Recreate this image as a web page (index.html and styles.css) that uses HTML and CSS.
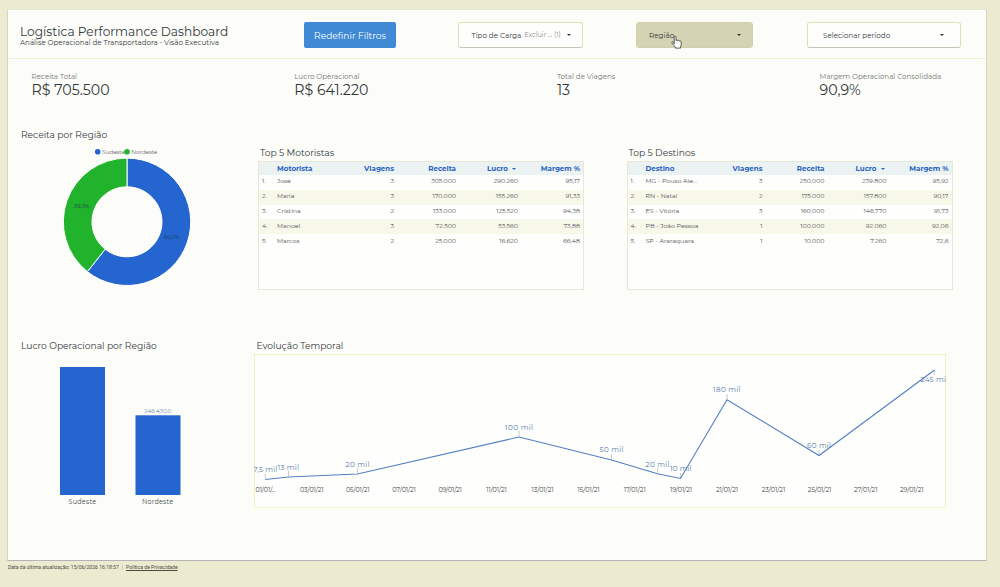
FILE: index.html
```html
<!DOCTYPE html>
<html lang="pt-BR">
<head>
<meta charset="utf-8">
<title>Logística Performance Dashboard</title>
<link rel="stylesheet" href="styles.css">
</head>
<body>
<main class="sheet">
  <header class="topbar">
    <div class="brand">
      <h1 class="title">Logística Performance Dashboard</h1>
      <p class="subtitle">Análise Operacional de Transportadora - Visão Executiva</p>
    </div>
    <button class="reset">Redefinir Filtros</button>
    <div class="filter filter-load"><span class="filter-name">Tipo de Carga</span><span class="filter-value">: Excluir ... (1)</span><i class="caret"></i></div>
    <div class="filter filter-region"><span class="filter-name">Região</span><i class="caret"></i>
      <svg class="pointer" viewBox="0 0 12 14"><path d="M3.2 8.7V2.2c0-1.3 1.8-1.3 1.8 0v3.3c.2-.8 1.7-.7 1.8.3.3-.7 1.6-.5 1.7.4.4-.6 1.7-.3 1.7.8v2.5c0 1-.7 1.7-.7 2.8v.8H4.4v-.8C3.4 11 2.5 9.6 1 8.2c-.8-.9.3-1.8 1.2-1z"/></svg>
    </div>
    <div class="filter filter-period"><span class="filter-name">Selecionar período</span><i class="caret"></i></div>
  </header>

  <section class="kpis">
    <div><p class="kpi-label">Receita Total</p><p class="kpi-value">R$ 705.500</p></div>
    <div><p class="kpi-label">Lucro Operacional</p><p class="kpi-value">R$ 641.220</p></div>
    <div><p class="kpi-label">Total de Viagens</p><p class="kpi-value">13</p></div>
    <div><p class="kpi-label">Margem Operacional Consolidada</p><p class="kpi-value">90,9%</p></div>
  </section>

  <section class="row-top">
    <div class="donut-panel">
      <h2 class="heading">Receita por Região</h2>
      <svg class="donut" width="160" height="145" viewBox="50 145 160 145">
        <circle cx="97.7" cy="151.8" r="2.8" fill="#2465cf"/>
        <text class="legend" x="102" y="154" textLength="23">Sudeste</text>
        <circle cx="127" cy="151.8" r="2.8" fill="#21b32c"/>
        <text class="legend" x="131.3" y="154" textLength="26">Nordeste</text>
        <path d="M127 158.1A63.7 63.7 0 1 1 87.35 271.65L105.2 249.2A35 35 0 1 0 127 186.8Z" fill="#2465cf" stroke="#fff"/>
        <path d="M127 158.1A63.7 63.7 0 0 0 87.35 271.65L105.2 249.2A35 35 0 0 1 127 186.8Z" fill="#21b32c" stroke="#fff"/>
        <text class="slice" x="74" y="207.7" textLength="15.5">39,3%</text>
        <text class="slice" x="164" y="239.4" textLength="16">60,7%</text>
      </svg>
    </div>
    <div class="table-panel">
      <h2 class="heading">Top 5 Motoristas</h2>
      <div class="box">
        <table class="rank">
          <colgroup><col class="c-i"><col class="c-n"><col class="c-v"><col class="c-r"><col class="c-l"><col class="c-m"></colgroup>
          <thead><tr><th></th><th>Motorista</th><th>Viagens</th><th>Receita</th><th class="sorted">Lucro<i class="sort"></i></th><th>Margem %</th></tr></thead>
          <tbody>
            <tr><td>1.</td><td>José</td><td>3</td><td>305.000</td><td>290.260</td><td>95,17</td></tr>
            <tr><td>2.</td><td>Maria</td><td>3</td><td>170.000</td><td>155.260</td><td>91,33</td></tr>
            <tr><td>3.</td><td>Cristina</td><td>2</td><td>133.000</td><td>125.520</td><td>94,38</td></tr>
            <tr><td>4.</td><td>Manoel</td><td>3</td><td>72.500</td><td>53.560</td><td>73,88</td></tr>
            <tr><td>5.</td><td>Marcos</td><td>2</td><td>25.000</td><td>16.620</td><td>66,48</td></tr>
          </tbody>
        </table>
      </div>
    </div>
    <div class="table-panel">
      <h2 class="heading">Top 5 Destinos</h2>
      <div class="box">
        <table class="rank">
          <colgroup><col class="c-i"><col class="c-n"><col class="c-v"><col class="c-r"><col class="c-l"><col class="c-m"></colgroup>
          <thead><tr><th></th><th>Destino</th><th>Viagens</th><th>Receita</th><th class="sorted">Lucro<i class="sort"></i></th><th>Margem %</th></tr></thead>
          <tbody>
            <tr><td>1.</td><td>MG - Pouso Ale...</td><td>3</td><td>250.000</td><td>239.800</td><td>95,92</td></tr>
            <tr><td>2.</td><td>RN - Natal</td><td>2</td><td>175.000</td><td>157.800</td><td>90,17</td></tr>
            <tr><td>3.</td><td>ES - Vitória</td><td>3</td><td>160.000</td><td>146.770</td><td>91,73</td></tr>
            <tr><td>4.</td><td>PB - João Pessoa</td><td>1</td><td>100.000</td><td>92.060</td><td>92,06</td></tr>
            <tr><td>5.</td><td>SP - Araraquara</td><td>1</td><td>10.000</td><td>7.260</td><td>72,6</td></tr>
          </tbody>
        </table>
      </div>
    </div>
  </section>

  <section class="row-bottom">
    <div class="bar-panel">
      <h2 class="heading">Lucro Operacional por Região</h2>
      <svg class="bars" width="200" height="155" viewBox="20 354 200 155">
        <rect x="60" y="367" width="45" height="128" fill="#2465cf"/>
        <rect x="135.5" y="415.3" width="45" height="79.7" fill="#2465cf"/>
        <text class="bar-value" x="144.3" y="412.8" textLength="27">246.430,0</text>
        <text class="axis" x="68.5" y="504.3" textLength="27.5">Sudeste</text>
        <text class="axis" x="142" y="504.3" textLength="31">Nordeste</text>
      </svg>
    </div>
    <div class="line-panel">
      <h2 class="heading">Evolução Temporal</h2>
      <svg class="line" width="692" height="154" viewBox="254 354 692 154">
        <rect class="frame" x="254.5" y="354.5" width="691" height="153"/>
        <path class="ticks" d="M265.3 474v5M288.5 471v5M357.5 468v5M519 431v5M611.5 454v5M657.5 468v5M680.5 473v5M727 394v5M819 450v5M934.5 371v4"/>
        <polyline class="trend" points="265.3,479.5 288.5,477 357.5,474 519,437 611.5,460 657.5,473.7 680.5,478.5 727,399.7 819,455.5 934.5,370"/>
        <g class="point">
          <text x="253.3" y="472" textLength="24">7,5 mil</text>
          <text x="277.5" y="470" textLength="21.5">13 mil</text>
          <text x="345.5" y="466.6" textLength="24">20 mil</text>
          <text x="505" y="429.6" textLength="28">100 mil</text>
          <text x="599.5" y="452.2" textLength="24">50 mil</text>
          <text x="645.5" y="466.6" textLength="24">20 mil</text>
          <text x="670" y="471.2" textLength="21.5">10 mil</text>
          <text x="713" y="392.3" textLength="27.5">180 mil</text>
          <text x="807" y="447.6" textLength="24">60 mil</text>
          <text x="920.5" y="382.2" textLength="27.5">245 mil</text>
        </g>
        <g class="axis">
          <text x="255.5" y="492.2" textLength="20">01/01/...</text>
          <text x="300" y="492.2" textLength="23.5">03/01/21</text>
          <text x="346" y="492.2" textLength="23.5">05/01/21</text>
          <text x="392.3" y="492.2" textLength="23.5">07/01/21</text>
          <text x="438.4" y="492.2" textLength="23.5">09/01/21</text>
          <text x="486.3" y="492.2" textLength="20.5">11/01/21</text>
          <text x="531.5" y="492.2" textLength="22">13/01/21</text>
          <text x="577.6" y="492.2" textLength="22">15/01/21</text>
          <text x="623.7" y="492.2" textLength="22">17/01/21</text>
          <text x="670" y="492.2" textLength="22">19/01/21</text>
          <text x="716" y="492.2" textLength="22">21/01/21</text>
          <text x="761.7" y="492.2" textLength="23.5">23/01/21</text>
          <text x="807.8" y="492.2" textLength="23.5">25/01/21</text>
          <text x="854" y="492.2" textLength="23.5">27/01/21</text>
          <text x="900" y="492.2" textLength="23.5">29/01/21</text>
        </g>
      </svg>
    </div>
  </section>
</main>
<footer class="foot"><span>Data da última atualização: 15/06/2026 16:18:57</span><span class="sep">|</span><a class="privacy">Política de Privacidade</a></footer>
</body>
</html>
```
FILE: styles.css
```css
* { box-sizing: border-box; }
body {
  margin: 0;
  width: 1000px;
  height: 587px;
  overflow: hidden;
  padding: 9px 0 0 7px;
  background: #ecebd0;
  color: #33383c;
  font-family: Montserrat, Inter, sans-serif;
}
h1, h2, p { margin: 0; font-weight: 400; white-space: nowrap; }
.sheet {
  display: flex;
  flex-direction: column;
  width: 980px;
  height: 552px;
  background: #fcfdf9;
  border: 1px solid #d3d3cf;
  border-top-color: #e6e6dc;
  border-bottom-color: #b4b4b8;
}
.topbar {
  display: flex;
  height: 49px;
  padding: 12px 0 0 12px;
  border-bottom: 1px solid #eef0d2;
}
.brand { width: 284px; padding-top: 2px; }
.title { font-size: 12.2px; line-height: 15px; }
.subtitle { font-size: 7.12px; line-height: 8px; }
.reset {
  width: 92px;
  height: 26px;
  padding: 0;
  border: 0;
  border-radius: 2px;
  background: #4089d4;
  color: #fff;
  font: 400 9.1px Montserrat, Inter, sans-serif;
}
.filter {
  display: flex;
  align-items: center;
  height: 26px;
  border: 1px solid #e2e0b8;
  border-bottom-color: #c4c4b8;
  border-radius: 3px;
  background: #fefefc;
  font-size: 7.2px;
  white-space: nowrap;
  position: relative;
}
.filter-load { width: 125px; margin-left: 62px; padding: 0 11px 0 12.5px; }
.filter-region { width: 117px; margin-left: 53px; padding: 0 11px 0 12px; background: #d4d4b4; border-color: #d0d0b0; }
.filter-period { width: 154px; margin-left: 54px; padding: 0 16px 0 15px; }
.filter-value { font-size: 6.6px; color: #8b8f91; }
.caret {
  margin-left: auto;
  border: 2px solid transparent;
  border-top: 2.5px solid #333;
  border-bottom: 0;
}
.pointer {
  position: absolute;
  left: 34px;
  top: 12px;
  width: 12px;
  height: 14px;
  fill: #fff;
  stroke: #333;
  stroke-width: .8;
}
.kpis {
  display: grid;
  grid-template-columns: repeat(4, 262.7px);
  width: 978px;
  height: 69px;
  overflow: hidden;
  padding: 12px 0 0 23.5px;
}
.kpi-label { font-size: 7.15px; line-height: 11px; color: #74787a; }
.kpi-value { font-size: 14.2px; line-height: 16px; }
.heading { font-size: 9.15px; line-height: 13px; }
.row-top { display: flex; height: 211px; }
.donut-panel { width: 250px; padding-left: 13px; }
.donut { display: block; margin: 4px 0 0 29px; }
.table-panel { width: 326px; padding-top: 19px; }
.donut-panel, .table-panel { flex: none; }
.table-panel + .table-panel { margin-left: 42.5px; }
.table-panel .heading { padding-left: 2px; line-height: 12px; height: 14px; }
.box { width: 326px; height: 129px; border: 1px solid #e8e8d8; background: #fefefc; }
.rank { width: 324px; border-collapse: collapse; table-layout: fixed; font-size: 6.25px; color: #4c5154; }
.c-i { width: 18px; }
.c-n { width: 62px; }
.c-v { width: 55px; }
.c-r { width: 62px; }
.c-l { width: 62px; }
.rank th, .rank td { padding: 0; text-align: right; white-space: nowrap; }
.rank th { height: 13px; background: #eaf2f2; color: #2a62c0; font-size: 7.1px; font-weight: 700; }
.rank td { height: 14.8px; padding-bottom: 2px; }
.rank td:first-child { text-align: left; padding-left: 3px; }
.rank td:nth-child(2), .rank th:nth-child(2) { text-align: left; }
.rank th:last-child, .rank td:last-child { padding-right: 3px; }
.rank tbody tr:nth-child(even) { background: #f8f8ea; }
.sort { display: inline-block; margin: 0 2px 1.5px 4px; border: 2px solid transparent; border-top-color: #2a62c0; border-bottom: 0; }
.row-bottom { display: flex; }
.bar-panel { width: 246px; padding-left: 13px; }
.bars { display: block; margin-left: -1px; }
.line-panel .heading { padding-left: 2.5px; }
.bar-panel .heading, .line-panel .heading { height: 15px; line-height: 14px; }
.line { display: block; }
.frame { fill: #fefefc; stroke: #f0f0c0; }
.trend { fill: none; stroke: #527fc4; stroke-width: 1.1; }
.ticks { stroke: #aeb4b8; stroke-width: .7; }
.point text { font-size: 7.3px; fill: #5479a8; }
.legend { font-size: 5.8px; fill: #5e6364; }
.slice { font-size: 5.6px; fill: #173a55; }
.axis { font-size: 6.4px; fill: #44494c; }
.bar-value { font-size: 5.8px; fill: #5c86a8; }
.foot {
  display: flex;
  padding: 3px 0 0 1px;
  font: 5.1px/7px Roboto, sans-serif;
  color: #4a4a46;
}
.sep { margin: 0 3px; color: #99998a; }
.privacy { text-decoration: underline; }
```
